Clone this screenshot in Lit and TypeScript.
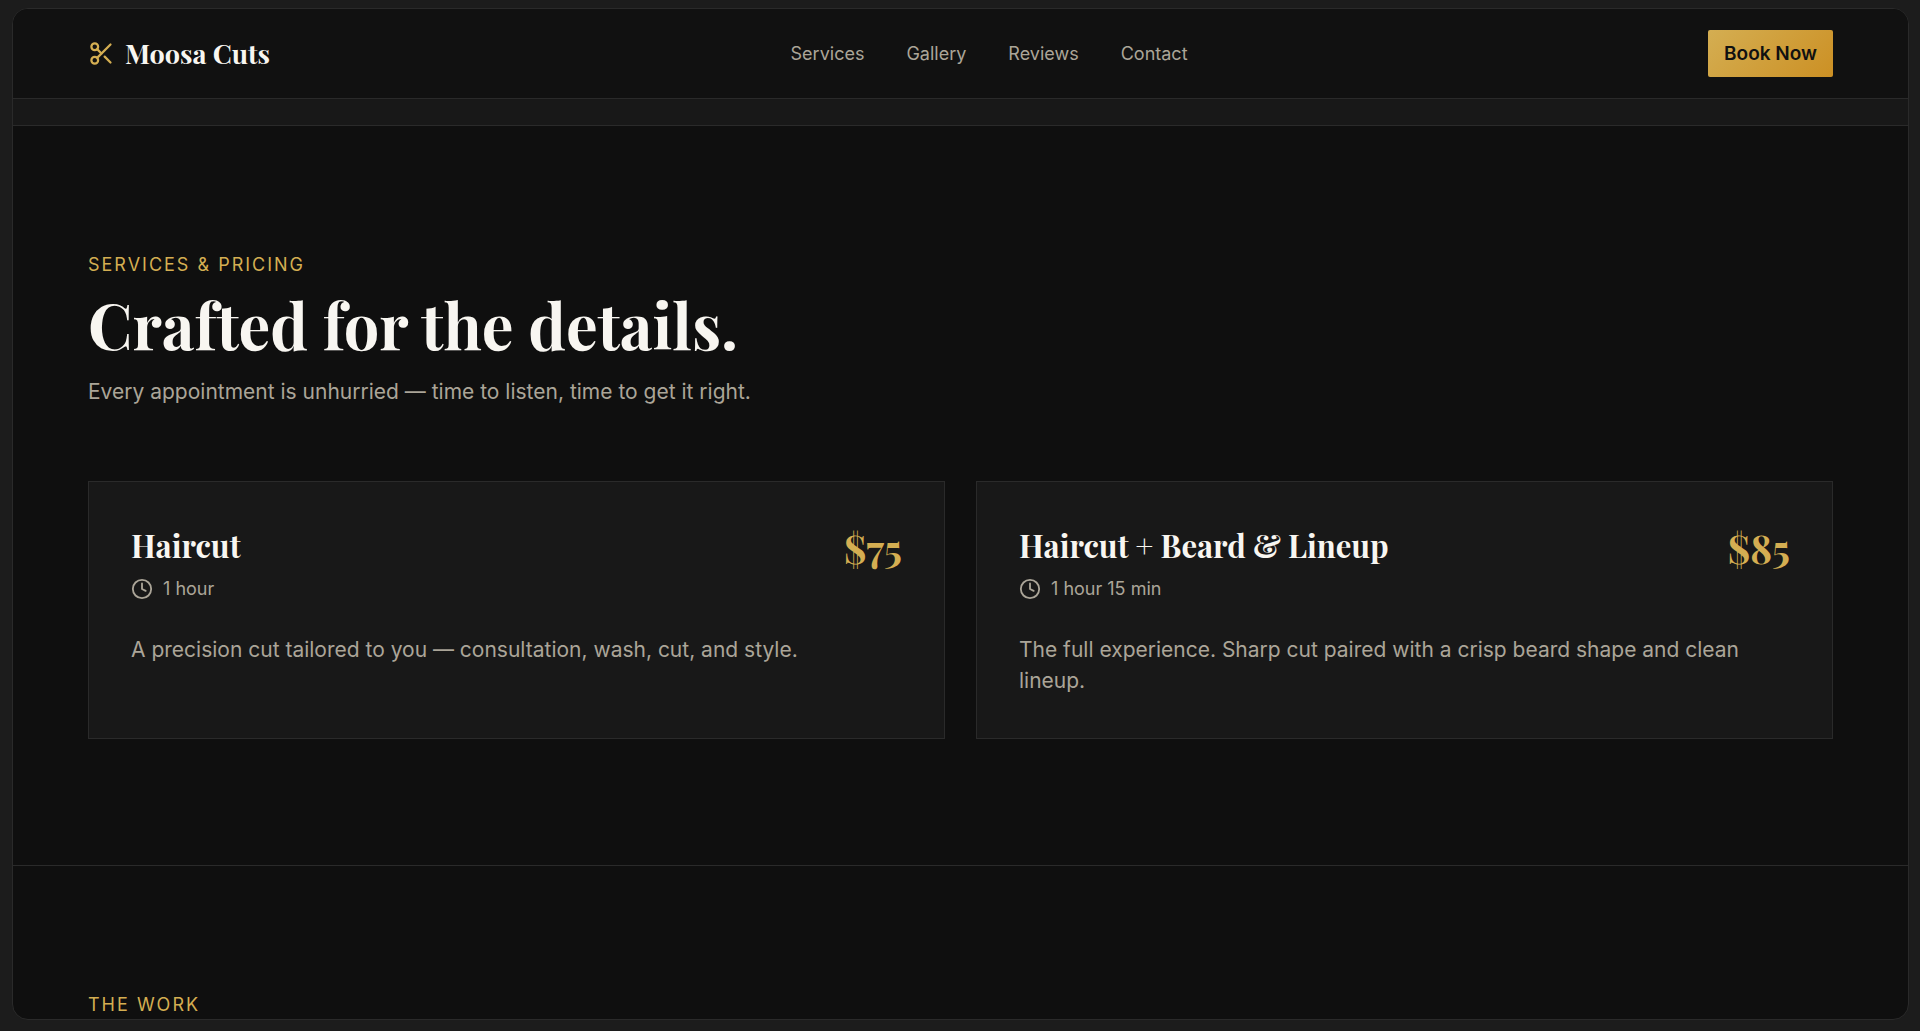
import { LitElement, html, css, svg } from "lit";
import { customElement, property } from "lit/decorators.js";

interface Service {
  name: string;
  duration: string;
  price: string;
  description: string;
}

const NAV_LINKS = ["Services", "Gallery", "Reviews", "Contact"];

const SERVICES: Service[] = [
  {
    name: "Haircut",
    duration: "1 hour",
    price: "$75",
    description: "A precision cut tailored to you — consultation, wash, cut, and style.",
  },
  {
    name: "Haircut + Beard & Lineup",
    duration: "1 hour 15 min",
    price: "$85",
    description: "The full experience. Sharp cut paired with a crisp beard shape and clean lineup.",
  },
];

const scissorsPaths = svg`
  <circle cx="6" cy="6" r="3"></circle>
  <path d="M8.12 8.12 12 12"></path>
  <path d="M20 4 8.12 15.88"></path>
  <circle cx="6" cy="18" r="3"></circle>
  <path d="M14.8 14.8 20 20"></path>`;

const clockPaths = svg`
  <circle cx="12" cy="12" r="10"></circle>
  <path d="M12 6v6l4 2"></path>`;

@customElement("service-card")
export class ServiceCard extends LitElement {
  @property({ attribute: false }) service!: Service;

  static styles = css`
    :host {
      display: block;
      box-sizing: border-box;
      padding: 42px;
      border: 1px solid #2a2a2a;
      background: #181818;
    }
    .top {
      display: flex;
      justify-content: space-between;
      align-items: flex-start;
      gap: 24px;
    }
    .name {
      margin: 0;
      font: 700 31px/42px "Playfair Display", "Liberation Serif", serif;
      color: #f8f6f1;
    }
    .duration {
      display: flex;
      align-items: center;
      gap: 10px;
      margin: 10px 0 0;
      font-size: 18px;
      line-height: 26px;
    }
    .clock {
      width: 22px;
      height: 22px;
      fill: none;
      stroke: currentColor;
      stroke-width: 2;
      stroke-linecap: round;
      stroke-linejoin: round;
    }
    .price {
      font: 700 39px/48px "Playfair Display", "Liberation Serif", serif;
      color: #d4ae52;
    }
    .description {
      margin: 32px 0 0;
      font-size: 21px;
      line-height: 31px;
    }
  `;

  render() {
    const { name, duration, price, description } = this.service;
    return html`
      <div class="top">
        <div>
          <h3 class="name">${name}</h3>
          <p class="duration">
            <svg class="clock" viewBox="0 0 24 24" aria-hidden="true">${clockPaths}</svg>
            ${duration}
          </p>
        </div>
        <span class="price">${price}</span>
      </div>
      <p class="description">${description}</p>
    `;
  }
}

@customElement("app-root")
export class AppRoot extends LitElement {
  static styles = css`
    :host {
      display: flex;
      box-sizing: border-box;
      height: 100vh;
      padding: 8px 11px 11px 12px;
      background: #1c1c1c;
      color: #aba598;
      font-family: Inter, "Liberation Sans", sans-serif;
    }
    .frame {
      flex: 1;
      min-width: 0;
      overflow: hidden;
      border: 1px solid #2a2a2a;
      border-radius: 16px;
      background: #0f0f0f;
    }
    .header {
      display: flex;
      justify-content: space-between;
      align-items: center;
      padding: 21px 75px;
      border-bottom: 1px solid #2a2a2a;
      background: #111111;
    }
    .brand {
      display: flex;
      align-items: center;
      gap: 10px;
      color: #f8f6f1;
      font: 700 27px/35px "Playfair Display", "Liberation Serif", serif;
      text-decoration: none;
    }
    .scissors {
      width: 27px;
      height: 27px;
      fill: none;
      stroke: #d4ae52;
      stroke-width: 2;
      stroke-linecap: round;
      stroke-linejoin: round;
    }
    .nav {
      display: flex;
      gap: 42px;
    }
    .link {
      color: inherit;
      font-size: 18px;
      line-height: 26px;
      text-decoration: none;
    }
    .book {
      padding: 10px 16px;
      border: 0;
      border-radius: 2px;
      background: linear-gradient(135deg, #d4ae52, #cc9024);
      color: #111111;
      font: 600 19px/27px Inter, "Liberation Sans", sans-serif;
    }
    .strip {
      height: 26px;
      border-bottom: 1px solid #2a2a2a;
      background: #181818;
    }
    .section {
      padding: 126px 75px;
      border-bottom: 1px solid #2a2a2a;
    }
    .eyebrow {
      margin: 0;
      color: #d4ae52;
      font-size: 18px;
      line-height: 26px;
      letter-spacing: 2px;
      text-transform: uppercase;
    }
    .heading {
      margin: 15px 0 20px;
      color: #f8f6f1;
      font: 700 63px/63px "Playfair Display", "Liberation Serif", serif;
    }
    .lead {
      margin: 0;
      font-size: 21px;
      line-height: 31px;
    }
    .cards {
      display: grid;
      grid-template-columns: 1fr 1fr;
      gap: 31px;
      margin-top: 74px;
    }
  `;

  render() {
    return html`
      <div class="frame">
        <header class="header">
          <a class="brand" href="#top">
            <svg class="scissors" viewBox="0 0 24 24" aria-hidden="true">${scissorsPaths}</svg>
            Moosa Cuts
          </a>
          <nav class="nav">
            ${NAV_LINKS.map(
              (label) => html`<a class="link" href="#${label.toLowerCase()}">${label}</a>`
            )}
          </nav>
          <button class="book" type="button">Book Now</button>
        </header>
        <main>
          <div class="strip"></div>
          <section class="section" id="services">
            <p class="eyebrow">Services &amp; Pricing</p>
            <h2 class="heading">Crafted for the details.</h2>
            <p class="lead">Every appointment is unhurried — time to listen, time to get it right.</p>
            <div class="cards">
              ${SERVICES.map((s) => html`<service-card .service=${s}></service-card>`)}
            </div>
          </section>
          <section class="section" id="gallery">
            <p class="eyebrow">The Work</p>
          </section>
        </main>
      </div>
    `;
  }
}
